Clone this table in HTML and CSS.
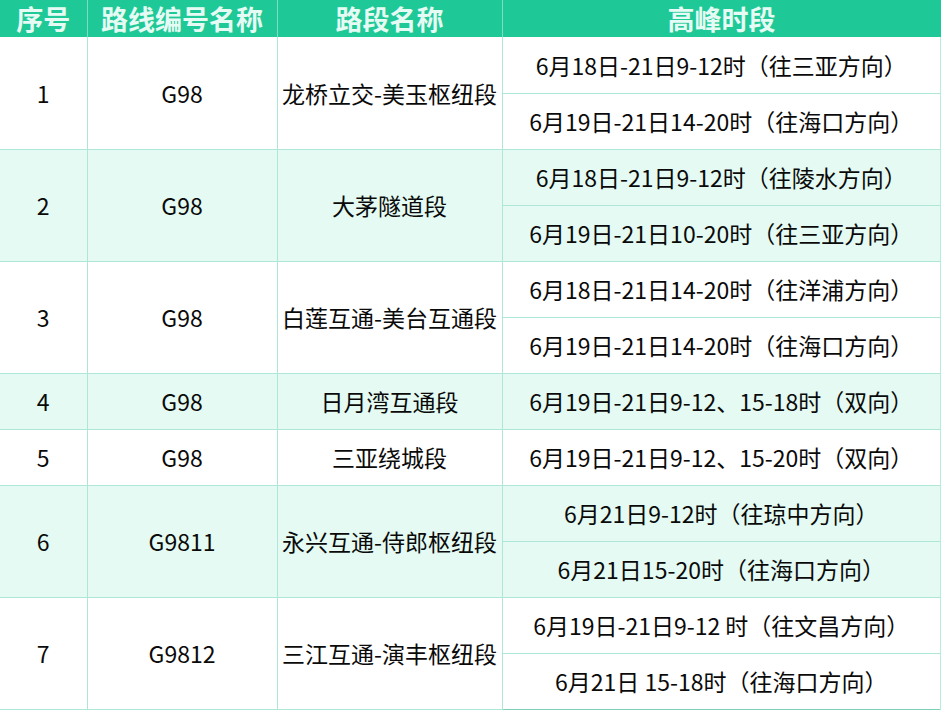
FILE: index.html
```html
<!DOCTYPE html>
<html lang="zh">
<head>
<meta charset="utf-8">
<link rel="stylesheet" href="styles.css">
</head>
<body>
<table class="peak">
  <colgroup>
    <col class="c1"><col class="c2"><col class="c3"><col class="c4">
  </colgroup>
  <thead>
    <tr class="head">
      <th>序号</th><th>路线编号名称</th><th>路段名称</th><th>高峰时段</th>
    </tr>
  </thead>
  <tbody>
    <tr><td rowspan="2">1</td><td rowspan="2">G98</td><td rowspan="2">龙桥立交-美玉枢纽段</td><td>6月18日-21日9-12时（往三亚方向）</td></tr>
    <tr><td>6月19日-21日14-20时（往海口方向）</td></tr>
    <tr class="alt"><td rowspan="2">2</td><td rowspan="2">G98</td><td rowspan="2">大茅隧道段</td><td>6月18日-21日9-12时（往陵水方向）</td></tr>
    <tr class="alt"><td>6月19日-21日10-20时（往三亚方向）</td></tr>
    <tr><td rowspan="2">3</td><td rowspan="2">G98</td><td rowspan="2">白莲互通-美台互通段</td><td>6月18日-21日14-20时（往洋浦方向）</td></tr>
    <tr><td>6月19日-21日14-20时（往海口方向）</td></tr>
    <tr class="alt"><td>4</td><td>G98</td><td>日月湾互通段</td><td>6月19日-21日9-12、15-18时（双向）</td></tr>
    <tr><td>5</td><td>G98</td><td>三亚绕城段</td><td>6月19日-21日9-12、15-20时（双向）</td></tr>
    <tr class="alt"><td rowspan="2">6</td><td rowspan="2">G9811</td><td rowspan="2">永兴互通-侍郎枢纽段</td><td>6月21日9-12时（往琼中方向）</td></tr>
    <tr class="alt"><td>6月21日15-20时（往海口方向）</td></tr>
    <tr><td rowspan="2">7</td><td rowspan="2">G9812</td><td rowspan="2">三江互通-演丰枢纽段</td><td>6月19日-21日9-12 时（往文昌方向）</td></tr>
    <tr><td>6月21日 15-18时（往海口方向）</td></tr>
  </tbody>
</table>
</body>
</html>
```
FILE: styles.css
```css
html, body {
  margin: 0;
  padding: 0;
  background: #ffffff;
}
.peak {
  width: 941px;
  table-layout: fixed;
  border-collapse: collapse;
  font-family: "Noto Sans CJK SC", "Open Sans", sans-serif;
  color: #0a0a0a;
}
.c1 { width: 87px; }
.c2 { width: 190px; }
.c3 { width: 225px; }
.c4 { width: 439px; }
.head {
  height: 37px;
  background: #1fc897;
}
.head th {
  padding: 0;
  font-size: 27px;
  font-weight: 700;
  line-height: 36px;
  color: #e6fbf3;
  border-left: 1px solid #7fdcc0;
  border-right: 1px solid #7fdcc0;
  text-align: center;
  overflow: hidden;
}
.head th:first-child { border-left: none; }
.peak tbody tr {
  height: 56px;
}
.peak td {
  padding: 0;
  border: 1px solid #aee6d8;
  font-size: 23px;
  line-height: 30px;
  text-align: center;
  vertical-align: middle;
  white-space: nowrap;
}
.peak tbody tr:first-child td { border-top: none; }
.peak tr > td:first-child { border-left: none; }
.peak tbody tr:last-child td { border-bottom: 1px solid #7fcfb9; }
.peak tbody tr td:last-child { border-right: 2px solid #b8ece0; }
.alt {
  background: #e4faf2;
}
```
